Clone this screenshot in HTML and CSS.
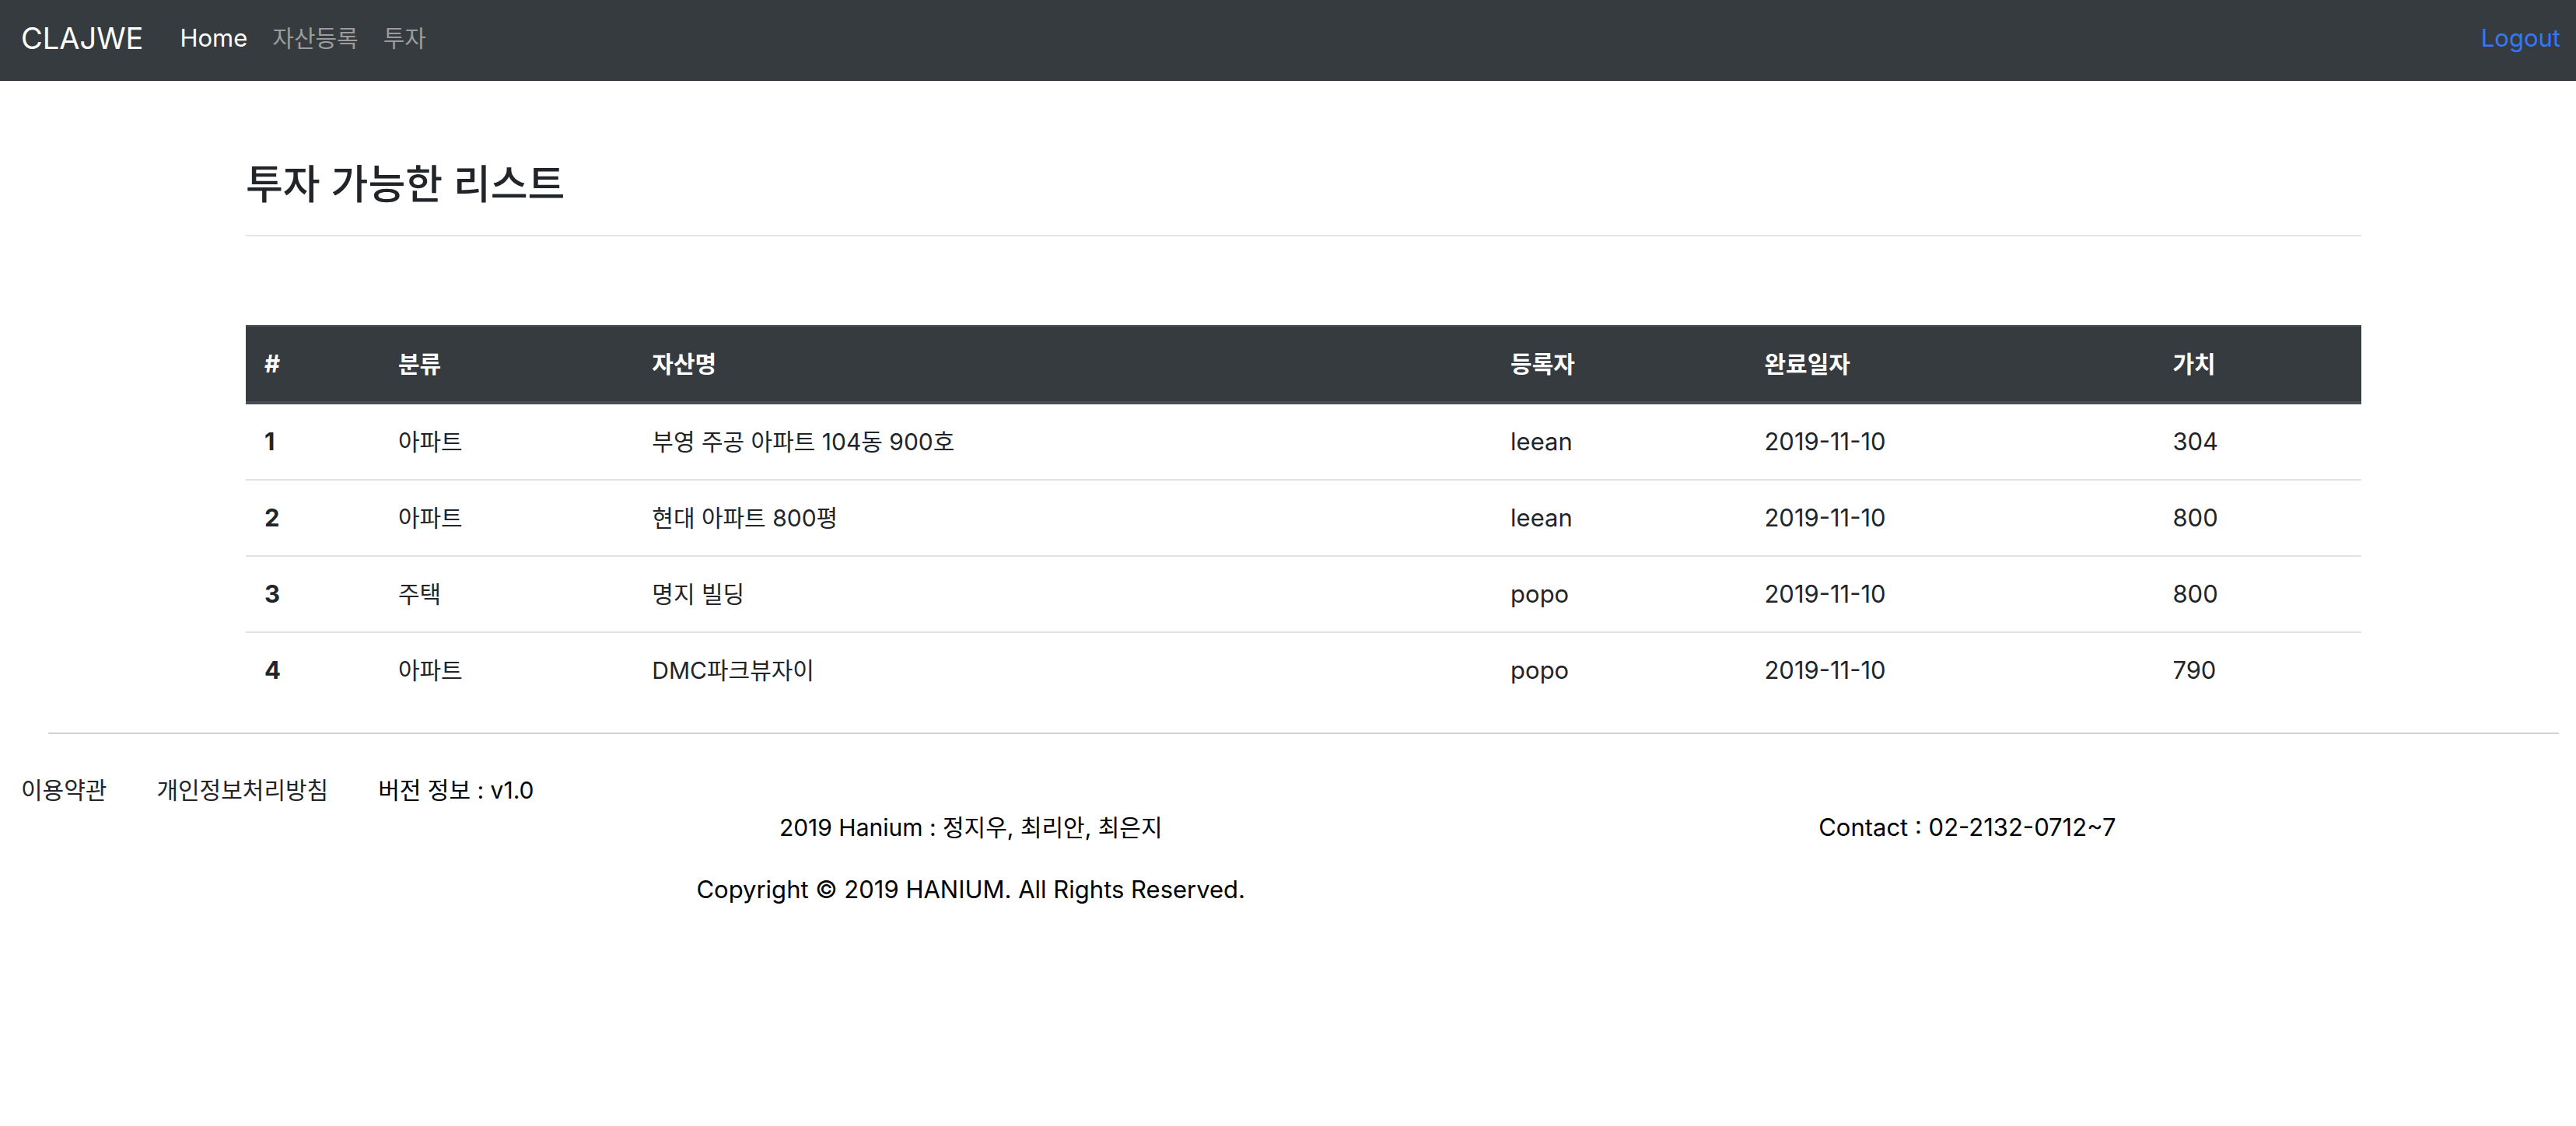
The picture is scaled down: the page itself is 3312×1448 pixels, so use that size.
FILE: index.html
```html
<!DOCTYPE html>
<html lang="ko">
<head>
<meta charset="utf-8">
<meta name="viewport" content="width=device-width, initial-scale=1">
<title>CLAJWE</title>
<link rel="stylesheet" href="styles.css">
</head>
<body>
<nav class="navbar">
  <a class="brand" href="#">CLAJWE</a>
  <ul class="nav-list">
    <li><a class="nav-link active" href="#">Home</a></li>
    <li><a class="nav-link ko" href="#">자산등록</a></li>
    <li><a class="nav-link ko" href="#">투자</a></li>
  </ul>
  <a class="logout" href="#">Logout</a>
</nav>

<main class="content">
  <div class="container">
    <h1 class="title">투자 가능한 리스트</h1>
    <hr class="title-rule">
    <table class="assets">
      <colgroup>
        <col class="col-no"><col class="col-type"><col class="col-name">
        <col class="col-owner"><col class="col-date"><col class="col-value">
      </colgroup>
      <thead>
        <tr><th scope="col">#</th><th scope="col" class="ko">분류</th><th scope="col" class="ko">자산명</th><th scope="col" class="ko">등록자</th><th scope="col" class="ko">완료일자</th><th scope="col" class="ko">가치</th></tr>
      </thead>
      <tbody>
        <tr><th scope="row">1</th><td class="ko">아파트</td><td class="ko">부영 주공 아파트 104동 900호</td><td>leean</td><td>2019-11-10</td><td>304</td></tr>
        <tr><th scope="row">2</th><td class="ko">아파트</td><td class="ko">현대 아파트 800평</td><td>leean</td><td>2019-11-10</td><td>800</td></tr>
        <tr><th scope="row">3</th><td class="ko">주택</td><td class="ko">명지 빌딩</td><td>popo</td><td>2019-11-10</td><td>800</td></tr>
        <tr><th scope="row">4</th><td class="ko">아파트</td><td class="ko">DMC파크뷰자이</td><td>popo</td><td>2019-11-10</td><td>790</td></tr>
      </tbody>
    </table>
  </div>
  <hr class="footer-rule">
</main>

<footer class="footer">
  <ul class="footer-links ko">
    <li><a href="#">이용약관</a></li>
    <li><a href="#">개인정보처리방침</a></li>
    <li>버전 정보 : v1.0</li>
  </ul>
  <div class="footer-text">
    <p class="ko">2019 Hanium : 정지우, 최리안, 최은지</p>
    <p>Copyright © 2019 HANIUM. All Rights Reserved.</p>
  </div>
  <div class="footer-text">
    <p>Contact : 02-2132-0712~7</p>
  </div>
</footer>
</body>
</html>
```
FILE: styles.css
```css
* {
  box-sizing: border-box;
}

body {
  margin: 0;
  background: #fff;
  color: #212529;
  font: 400 31px/48px Inter, "Noto Sans CJK KR", sans-serif;
}

a {
  color: inherit;
  text-decoration: none;
}

ul {
  margin: 0;
  padding: 0;
  list-style: none;
}

/* Hangul runs wider than the Latin face, so it is set a step smaller */
.ko {
  font-size: 30px;
}

.navbar {
  display: flex;
  align-items: center;
  min-height: 104px;
  padding: 0 20px 6px 27px;
  border-bottom: 1px solid #343238;
  background: #363b3f;
}

.brand {
  color: #fff;
  font-size: 38px;
}

.nav-list {
  display: flex;
  gap: 32px;
  margin-left: 47px;
}

.nav-link {
  color: #9a9c9e;
}

.nav-link.active {
  color: #fff;
}

.logout {
  margin-left: auto;
  color: #3478f6;
}

.content {
  margin-left: 40px;
}

.container {
  width: calc(100% - 40px);
  max-width: 2720px;
  margin: 0 auto;
  padding-top: 100px;
}

.title {
  margin: 0;
  font-size: 52px;
  font-weight: 500;
  line-height: 68px;
}

.title-rule {
  height: 2px;
  margin: 30px 0 114px;
  border: 0;
  background: #e5e5e5;
}

.assets {
  width: 100%;
  table-layout: fixed;
  border-collapse: separate;
  border-spacing: 0;
  text-align: left;
}

.col-no { width: 6.32%; }
.col-type { width: 12%; }
.col-name { width: 40.58%; }
.col-owner { width: 12%; }
.col-date { width: 19.3%; }
.col-value { width: 9.8%; }

.assets th,
.assets td {
  padding: 24px;
  border-top: 2px solid #dfe2e6;
}

.assets th {
  font-weight: 700;
}

.assets thead th {
  border-top-color: #474e55;
  border-bottom: 4px solid #474e55;
  background: #363b3f;
  color: #fff;
}

.assets tbody tr:first-child > * {
  border-top: 0;
}

.footer-rule {
  height: 2px;
  margin: 32px 22px 0;
  border: 0;
  background: #d1d1d1;
}

.footer {
  display: grid;
  grid-template-columns: 21fr 34fr 44fr;
  padding: 48px 60px 0 0;
  color: #000;
}

.footer-links {
  display: flex;
  gap: 64px;
  padding-left: 27px;
  white-space: nowrap;
}

.footer-links a {
  color: #212529;
}

.footer-text {
  padding-top: 48px;
  text-align: center;
}

.footer-text p {
  margin: 0 0 32px;
}
```
